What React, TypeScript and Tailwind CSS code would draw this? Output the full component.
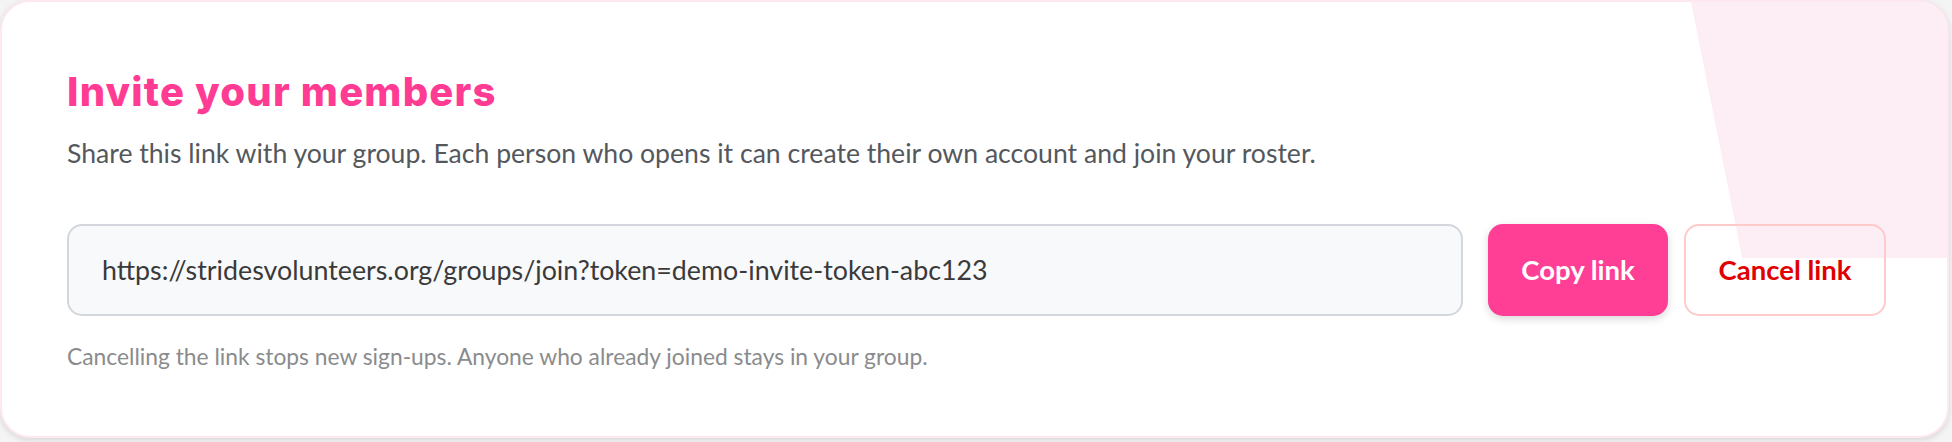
import React from "react";

export default function App() {
  return (
    <div className="h-[442px] w-[1952px] bg-[#f4f4f4]">
      <div
        className="relative h-[438px] w-[1949px] overflow-hidden rounded-[30px] border-2 border-[#fde7f0] bg-white shadow-[0_2px_6px_rgba(0,0,0,0.12)]"
        style={{ fontFamily: "Lato, 'Noto Sans', sans-serif" }}
      >
        <div className="absolute right-0 top-0 h-64 w-64 bg-[#fdedf4] [clip-path:polygon(0_0,100%_0,100%_100%,20%_100%)]" />
        <div className="relative pl-[65px] pr-[61px] pt-[66px]">
          <h1
            className="text-[40px] font-extrabold leading-[48px] tracking-[1.2px] text-[#ff3b93]"
            style={{ fontFamily: "Inter, 'Noto Sans', sans-serif" }}
          >
            Invite your members
          </h1>
          <p className="mt-[17px] text-[26.6px] leading-[41px] text-[#54585d]">
            Share this link with your group. Each person who opens it can create their own account and join your roster.
          </p>
          <div className="mt-[50px] flex h-[92px] items-stretch">
            <div className="flex flex-1 items-center rounded-[15px] border-2 border-[#d3d6dc] bg-[#f8f9fb] pl-[33px] text-[26.8px] text-[#3a3a3a]">
              https://stridesvolunteers.org/groups/join?token=demo-invite-token-abc123
            </div>
            <button className="ml-[25px] w-[180px] rounded-[15px] bg-[#ff3e95] text-[27.5px] font-bold text-white shadow-[0_3px_8px_rgba(0,0,0,0.15)]">
              Copy link
            </button>
            <button className="ml-[16px] w-[202px] rounded-[15px] border-2 border-[#fecaca] bg-transparent text-[27.5px] font-bold text-[#e00000]">
              Cancel link
            </button>
          </div>
          <p className="mt-[23px] text-[22.8px] leading-[34px] text-[#8a8b8d]">
            Cancelling the link stops new sign-ups. Anyone who already joined stays in your group.
          </p>
        </div>
      </div>
    </div>
  );
}
